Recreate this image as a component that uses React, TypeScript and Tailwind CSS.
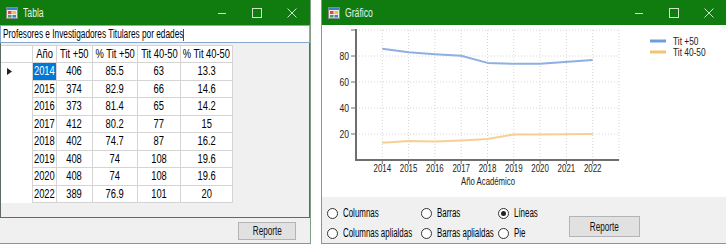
import React from 'react';

const FONT = '"Liberation Sans", Arial, sans-serif';

type Row = { year: number; t50: number; p50: number; t40: number; p40: number };

const rows: Row[] = [
  { year: 2014, t50: 406, p50: 85.5, t40: 63, p40: 13.3 },
  { year: 2015, t50: 374, p50: 82.9, t40: 66, p40: 14.6 },
  { year: 2016, t50: 373, p50: 81.4, t40: 65, p40: 14.2 },
  { year: 2017, t50: 412, p50: 80.2, t40: 77, p40: 15 },
  { year: 2018, t50: 402, p50: 74.7, t40: 87, p40: 16.2 },
  { year: 2019, t50: 408, p50: 74, t40: 108, p40: 19.6 },
  { year: 2020, t50: 408, p50: 74, t40: 108, p40: 19.6 },
  { year: 2022, t50: 389, p50: 76.9, t40: 101, p40: 20 },
];

const columns = [
  { label: 'Año', w: 'w-[24px]' },
  { label: 'Tit +50', w: 'w-[36px]' },
  { label: '% Tit +50', w: 'w-[45px]' },
  { label: 'Tit 40-50', w: 'w-[43px]' },
  { label: '% Tit 40-50', w: 'w-[52px]' },
];

// WinForms text is narrower than Arial, so labels are squeezed horizontally
function Narrow({ children, className = '' }: { children: React.ReactNode; className?: string }) {
  return <span className={`inline-block whitespace-nowrap shrink-0 ${className}`}>{children}</span>;
}

function AppIcon() {
  return (
    <svg width="12" height="12" viewBox="0 0 12 12" className="shrink-0">
      <rect x="0.5" y="0.5" width="11" height="11" fill="#e8e8e8" stroke="#8a8a8a" />
      <rect x="1" y="1" width="10" height="2" fill="#3d7fd6" />
      <rect x="2" y="4" width="3.5" height="3" fill="#e04a3a" />
      <rect x="6.5" y="4" width="3.5" height="3" fill="#f2c230" />
      <rect x="2" y="8" width="3.5" height="2.5" fill="#3fa548" />
      <rect x="6.5" y="8" width="3.5" height="2.5" fill="#3d7fd6" />
    </svg>
  );
}

function TitleBar({ title }: { title: string }) {
  return (
    <div className="h-[25px] bg-[#107c10] flex items-center text-[#e9f3e8] shrink-0">
      <div className="ml-[6px] flex items-center">
        <AppIcon />
      </div>
      <Narrow className="ml-[5px] text-[12px] leading-none origin-left scale-x-[0.72]">{title}</Narrow>
      <div className="ml-auto flex h-full">
        <div className="w-[35px] h-full flex items-center justify-center">
          <svg width="10" height="10" viewBox="0 0 10 10">
            <line x1="1" y1="5.5" x2="9" y2="5.5" stroke="#cfe3cd" strokeWidth="1" />
          </svg>
        </div>
        <div className="w-[35px] h-full flex items-center justify-center">
          <svg width="10" height="10" viewBox="0 0 10 10">
            <rect x="0.5" y="0.5" width="9" height="9" fill="none" stroke="#cfe3cd" strokeWidth="1" />
          </svg>
        </div>
        <div className="w-[36px] h-full flex items-center justify-center">
          <svg width="10" height="10" viewBox="0 0 10 10">
            <path d="M0.5 0.5 L9.5 9.5 M9.5 0.5 L0.5 9.5" stroke="#cfe3cd" strokeWidth="1" />
          </svg>
        </div>
      </div>
    </div>
  );
}

function Button({ label, className }: { label: string; className: string }) {
  return (
    <div
      className={`flex items-center justify-center bg-[#e1e1e1] border border-[#b4b4b4] text-[12px] text-[#111] shrink-0 ${className}`}
    >
      <Narrow className="scale-x-[0.68]">{label}</Narrow>
    </div>
  );
}

function Cell({ w, children, selected = false }: { w: string; children: React.ReactNode; selected?: boolean }) {
  return (
    <div
      className={`${w} h-full border-r border-b border-[#d4d4d4] flex items-center justify-center shrink-0 ${
        selected ? 'bg-[#0078d7] text-white' : ''
      }`}
    >
      <Narrow className="scale-x-[0.78]">{children}</Narrow>
    </div>
  );
}

function TablaWindow() {
  return (
    <div className="w-[311px] h-[244px] flex flex-col bg-[#f0f0f0] border-r border-b border-[#7f9f80] shrink-0">
      <TitleBar title="Tabla" />
      <div className="h-[18px] bg-white border border-[#86a8cc] flex items-center pl-[2px] text-[12px] text-black overflow-hidden shrink-0">
        <Narrow className="origin-left scale-x-[0.69]">
          Profesores e Investigadores Titulares por edades
          <span className="inline-block align-middle w-px h-[12px] bg-black" />
        </Narrow>
      </div>
      <div className="h-[175px] border-x border-b border-[#5f6b62] pt-[2px] shrink-0">
        <div className="text-[12px] text-black w-fit border-t border-[#d4d4d4]">
          <div className="flex h-[17px] bg-white">
            <div className="w-[32px] h-full border-r border-b border-[#d4d4d4]" />
            {columns.map((c) => (
              <Cell key={c.label} w={c.w}>
                {c.label}
              </Cell>
            ))}
          </div>
          {rows.map((r, i) => (
            <div key={r.year} className="flex h-[17.5px] bg-white">
              <div className="w-[32px] h-full border-r border-[#d4d4d4] flex items-center pl-[6px]">
                {i === 0 && (
                  <svg width="5" height="7" viewBox="0 0 5 7">
                    <path d="M0 0 L5 3.5 L0 7 Z" fill="#222" />
                  </svg>
                )}
              </div>
              <Cell w="w-[24px]" selected={i === 0}>
                {r.year}
              </Cell>
              <Cell w="w-[36px]">{r.t50}</Cell>
              <Cell w="w-[45px]">{r.p50}</Cell>
              <Cell w="w-[43px]">{r.t40}</Cell>
              <Cell w="w-[52px]">{r.p40}</Cell>
            </div>
          ))}
        </div>
      </div>
      <div className="flex-1 flex items-start justify-end pt-[4px] pr-[14px]">
        <Button label="Reporte" className="w-[58px] h-[18px]" />
      </div>
    </div>
  );
}

// chart geometry (svg coords)
const X0 = 34;
const STEP = 26.3;
const Y0 = 135;
const SCALE = 1.3;
const px = (year: number) => X0 + (year - 2013) * STEP;
const py = (v: number) => Y0 - v * SCALE;

function SqText({
  x,
  y,
  anchor = 'start',
  sx = 0.74,
  size = 11,
  children,
}: {
  x: number;
  y: number;
  anchor?: 'start' | 'middle' | 'end';
  sx?: number;
  size?: number;
  children: React.ReactNode;
}) {
  return (
    <text transform={`translate(${x} ${y}) scale(${sx} 1)`} fontSize={size} textAnchor={anchor} fill="#222">
      {children}
    </text>
  );
}

function LineChart() {
  const years = [2014, 2015, 2016, 2017, 2018, 2019, 2020, 2021, 2022];
  const blue = rows.map((r) => `${px(r.year)},${py(r.p50)}`).join(' ');
  const orange = rows.map((r) => `${px(r.year)},${py(r.p40)}`).join(' ');
  return (
    <svg width="405" height="172" viewBox="0 0 405 172" style={{ fontFamily: FONT }}>
      {/* grid */}
      {[...years, 2023].map((y) => (
        <line key={y} x1={px(y)} y1={py(100)} x2={px(y)} y2={Y0} stroke="#d6d6d6" strokeDasharray="1 2" />
      ))}
      {[20, 40, 60, 80, 100].map((v) => (
        <line key={v} x1={X0} y1={py(v)} x2={px(2023)} y2={py(v)} stroke="#d6d6d6" strokeDasharray="1 2" />
      ))}
      {/* axes */}
      <line x1={X0} y1={py(100) - 1} x2={X0} y2={Y0 + 1} stroke="#6e6e6e" strokeWidth="2" />
      <line x1={X0 - 1} y1={Y0} x2={px(2023)} y2={Y0} stroke="#6e6e6e" strokeWidth="2" />
      {[20, 40, 60, 80, 100].map((v) => (
        <line key={v} x1={X0 - 5} y1={py(v)} x2={X0} y2={py(v)} stroke="#6e6e6e" strokeWidth="1" />
      ))}
      {years.map((y) => (
        <line key={y} x1={px(y)} y1={Y0} x2={px(y)} y2={Y0 + 4} stroke="#6e6e6e" strokeWidth="1" />
      ))}
      {[20, 40, 60, 80].map((v) => (
        <SqText key={v} x={X0 - 7} y={py(v) + 4} anchor="end" sx={0.78}>
          {v}
        </SqText>
      ))}
      {years.map((y) => (
        <SqText key={y} x={px(y)} y={147} anchor="middle" sx={0.72}>
          {y}
        </SqText>
      ))}
      <SqText x={166} y={159.5} anchor="middle" sx={0.74} size={10.5}>
        Año Académico
      </SqText>
      {/* series */}
      <polyline points={blue} fill="none" stroke="#8db0e2" strokeWidth="2" strokeLinejoin="round" />
      <polyline points={orange} fill="none" stroke="#f7cf94" strokeWidth="2" strokeLinejoin="round" />
      {/* legend */}
      <line x1={328} y1={16} x2={344} y2={16} stroke="#6f9ee0" strokeWidth="3" />
      <SqText x={351} y={20} sx={0.76}>
        Tit +50
      </SqText>
      <line x1={328} y1={27} x2={344} y2={27} stroke="#f3c46f" strokeWidth="3" />
      <SqText x={351} y={31} sx={0.76}>
        Tit 40-50
      </SqText>
    </svg>
  );
}

function Radio({ label, checked = false }: { label: string; checked?: boolean }) {
  return (
    <div className="h-[20px] flex items-center">
      <div className="w-[11px] h-[11px] rounded-full border border-[#333] bg-white flex items-center justify-center shrink-0">
        {checked && <div className="w-[5px] h-[5px] rounded-full bg-[#222]" />}
      </div>
      <Narrow className="ml-[5px] text-[12px] text-black origin-left scale-x-[0.66]">{label}</Narrow>
    </div>
  );
}

function GraficoWindow() {
  return (
    <div className="flex-1 h-[244px] flex flex-col border-l border-b border-[#7f9f80]">
      <TitleBar title="Gráfico" />
      <div className="h-[172px] bg-white shrink-0">
        <LineChart />
      </div>
      <div className="flex-1 bg-[#f0f0f0] flex items-start pt-[6px] pl-[5px]">
        <div className="w-[94px] shrink-0">
          <Radio label="Columnas" />
          <Radio label="Columnas aplialdas" />
        </div>
        <div className="w-[77px] shrink-0">
          <Radio label="Barras" />
          <Radio label="Barras aplialdas" />
        </div>
        <div className="w-[71px] shrink-0">
          <Radio label="Líneas" checked />
          <Radio label="Pie" />
        </div>
        <Button label="Reporte" className="w-[71px] h-[21px] mt-[13px]" />
      </div>
    </div>
  );
}

export default function App() {
  return (
    <div className="w-[726px] h-[246px] bg-white flex gap-[10px] overflow-hidden" style={{ fontFamily: FONT }}>
      <TablaWindow />
      <GraficoWindow />
    </div>
  );
}
